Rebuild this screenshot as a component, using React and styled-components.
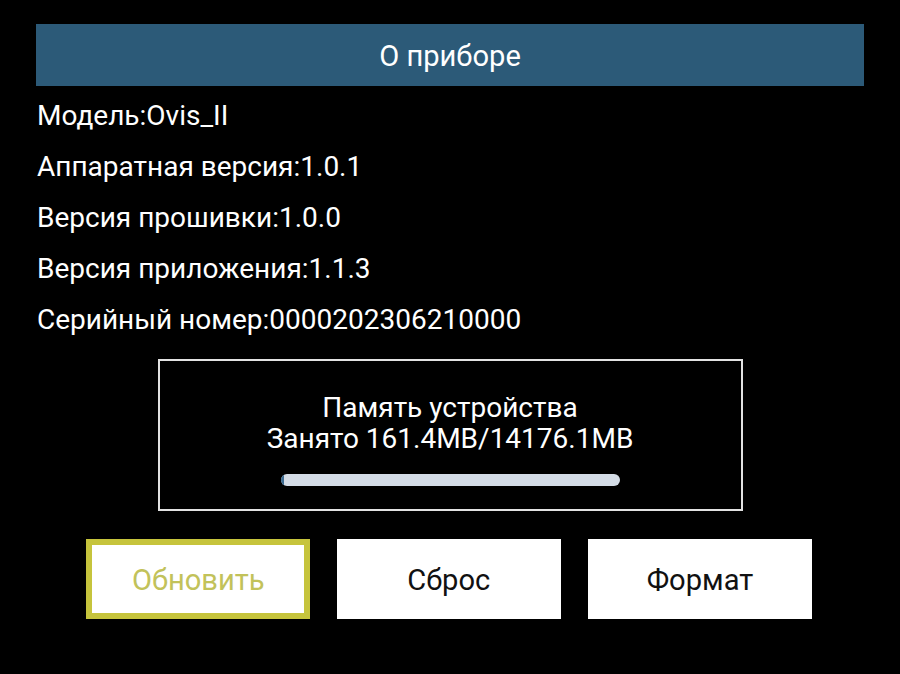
import React from 'react';
import styled, { createGlobalStyle } from 'styled-components';

const Global = createGlobalStyle`
  html, body {
    margin: 0;
    padding: 0;
    background: #000;
  }
  body {
    font-family: Roboto, "Noto Sans", sans-serif;
    color: #fff;
  }
`;

const Screen = styled.div`
  width: 900px;
  height: 674px;
  box-sizing: border-box;
  padding: 24px 36px 0 36px;
  background: #000;
  display: flex;
  flex-direction: column;
`;

const Header = styled.div`
  height: 62px;
  background: #2c5a78;
  display: flex;
  align-items: center;
  justify-content: center;
  font-size: 30px;
  padding-top: 1px;
  box-sizing: border-box;
`;

const Label = styled.span`
  display: inline-block;
  transform: scaleX(0.97);
`;

const InfoList = styled.div`
  margin-top: 4px;
  display: flex;
  flex-direction: column;
`;

const InfoLine = styled.div`
  line-height: 51px;
  font-size: 28px;
  padding-left: 1px;
`;

const MemoryBox = styled.div`
  margin: 14px auto 0 auto;
  width: 585px;
  height: 152px;
  box-sizing: border-box;
  border: 2px solid #e2e2e2;
  display: flex;
  flex-direction: column;
  align-items: center;
  padding-top: 31px;
`;

const MemLine = styled.div`
  font-size: 28px;
  line-height: 31px;
`;

const Bar = styled.div`
  margin-top: 20px;
  width: 339px;
  height: 12px;
  border-radius: 6px;
  background: #d4dce6;
  overflow: hidden;
  display: flex;
`;

const Fill = styled.div`
  height: 100%;
  background: #3b6a90;
`;

const Buttons = styled.div`
  margin: 28px auto 0 auto;
  display: flex;
  gap: 27px;
  padding-right: 2px;
`;

const Button = styled.button`
  width: 224px;
  height: 80px;
  box-sizing: border-box;
  background: #fff;
  border: ${p => (p.active ? '6px solid #c6c43c' : 'none')};
  font-family: Roboto, "Noto Sans", sans-serif;
  font-size: 30px;
  color: ${p => (p.active ? '#c2c25a' : '#111')};
  display: flex;
  align-items: center;
  justify-content: center;
  padding: 0;
  cursor: pointer;
`;

const info = [
  ['Модель', 'Ovis_II'],
  ['Аппаратная версия', '1.0.1'],
  ['Версия прошивки', '1.0.0'],
  ['Версия приложения', '1.1.3'],
  ['Серийный номер', '0000202306210000'],
];

export default function App() {
  const used = 161.4;
  const total = 14176.1;
  return (
    <>
      <Global />
      <Screen>
        <Header>
          <Label>О приборе</Label>
        </Header>
        <InfoList>
          {info.map(([k, v]) => (
            <InfoLine key={k}>{k}:{v}</InfoLine>
          ))}
        </InfoList>
        <MemoryBox>
          <MemLine>Память устройства</MemLine>
          <MemLine>Занято {used}MB/{total}MB</MemLine>
          <Bar>
            <Fill style={{ width: `${Math.max((used / total) * 100, 1)}%` }} />
          </Bar>
        </MemoryBox>
        <Buttons>
          <Button active><Label>Обновить</Label></Button>
          <Button><Label>Сброс</Label></Button>
          <Button><Label>Формат</Label></Button>
        </Buttons>
      </Screen>
    </>
  );
}
